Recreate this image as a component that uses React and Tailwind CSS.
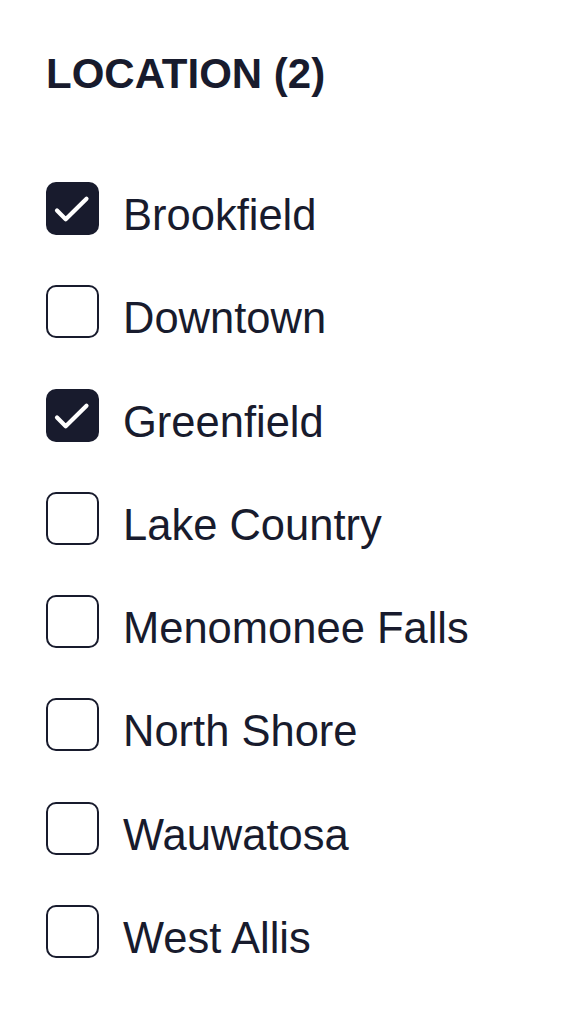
const locations = [
  { name: 'Brookfield', checked: true },
  { name: 'Downtown', checked: false },
  { name: 'Greenfield', checked: true },
  { name: 'Lake Country', checked: false },
  { name: 'Menomonee Falls', checked: false },
  { name: 'North Shore', checked: false },
  { name: 'Wauwatosa', checked: false },
  { name: 'West Allis', checked: false },
];

export default function App() {
  const count = locations.filter((l) => l.checked).length;
  return (
    <div className="min-h-screen bg-white pl-[46px] pt-[50px] text-[#181b2d] font-['Liberation_Sans',Arial,sans-serif]">
      <h2 className="text-[42px] font-bold leading-[48px]">LOCATION ({count})</h2>
      <div className="mt-[84px] flex flex-col gap-[50.3px]">
        {locations.map((loc) => (
          <label key={loc.name} className="flex h-[53px] items-start gap-[24px]">
            <Box checked={loc.checked} />
            <span className="translate-y-[7px] text-[43.5px] leading-[53px] whitespace-nowrap">{loc.name}</span>
          </label>
        ))}
      </div>
    </div>
  );
}

function Box({ checked }) {
  if (checked) {
    return (
      <span className="flex h-[53px] w-[53px] shrink-0 items-center justify-center rounded-[10px] bg-[#181b2d]">
        <svg width="53" height="53" viewBox="0 0 53 53" fill="none">
          <path d="M11 28.5 L19.7 37.2 L40.5 16.7" stroke="white" strokeWidth="4.2" strokeLinecap="round" strokeLinejoin="round" />
        </svg>
      </span>
    );
  }
  return <span className="h-[53px] w-[53px] shrink-0 rounded-[10px] border-[2.5px] border-[#181b2d] bg-white" />;
}
